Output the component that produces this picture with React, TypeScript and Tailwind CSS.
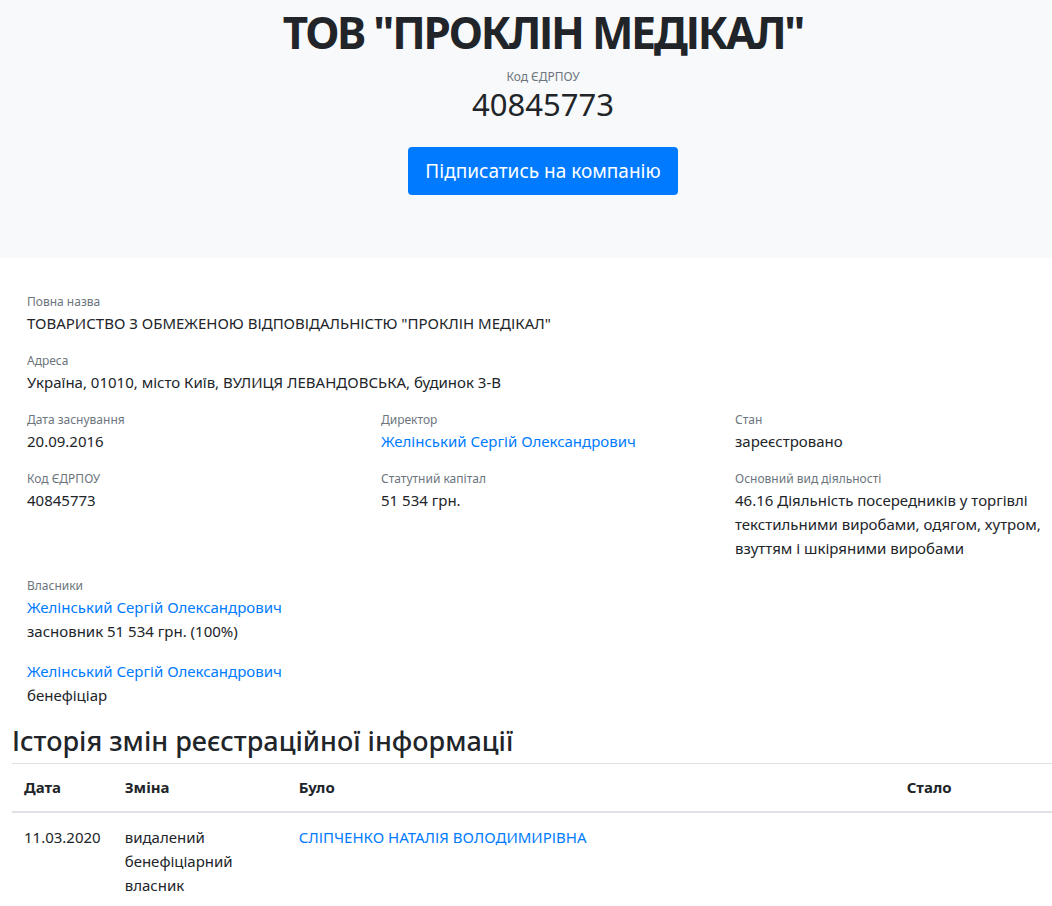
import React from 'react';

const font = { fontFamily: '"Noto Sans", "Open Sans", sans-serif' };

interface FieldProps {
  label: string;
  children: React.ReactNode;
}

const Field: React.FC<FieldProps> = ({ label, children }) => (
  <div className="mb-[17px]">
    <div className="text-[12px] leading-[18px] text-[#6c757d]">{label}</div>
    <div className="text-[15px] leading-[24px] text-[#212529]">{children}</div>
  </div>
);

const Link: React.FC<{ children: React.ReactNode }> = ({ children }) => (
  <a href="#" className="text-[#007bff] no-underline">{children}</a>
);

const App: React.FC = () => {
  return (
    <div className="min-h-screen bg-white text-[#212529]" style={font}>
      {/* header block */}
      <div className="bg-[#f8f9fa] h-[258px] flex flex-col items-center pt-[4px] pl-[34px]">
        <h1 className="text-[44px] leading-[56px] font-bold tracking-[-2.2px]">ТОВ "ПРОКЛІН МЕДІКАЛ"</h1>
        <div className="text-[12px] leading-[18px] text-[#6c757d] mt-[8px]">Код ЄДРПОУ</div>
        <div className="text-[31px] leading-[36px] mt-[0px]">40845773</div>
        <button className="mt-[25px] h-[48px] px-[17px] rounded-[4px] bg-[#007bff] text-white text-[19px]">
          Підписатись на компанію
        </button>
      </div>

      {/* details */}
      <div className="pl-[27px] pt-[35px]">
        <Field label="Повна назва">ТОВАРИСТВО З ОБМЕЖЕНОЮ ВІДПОВІДАЛЬНІСТЮ "ПРОКЛІН МЕДІКАЛ"</Field>
        <Field label="Адреса">Україна, 01010, місто Київ, ВУЛИЦЯ ЛЕВАНДОВСЬКА, будинок 3-В</Field>

        <div className="grid grid-cols-[354px_354px_1fr]">
          <Field label="Дата заснування">20.09.2016</Field>
          <Field label="Директор"><Link>Желінський Сергій Олександрович</Link></Field>
          <Field label="Стан">зареєстровано</Field>
          <Field label="Код ЄДРПОУ">40845773</Field>
          <Field label="Статутний капітал">51 534 грн.</Field>
          <Field label="Основний вид діяльності">
            46.16 Діяльність посередників у торгівлі текстильними виробами, одягом, хутром, взуттям і шкіряними виробами
          </Field>
        </div>

        <div>
          <div className="text-[12px] leading-[18px] text-[#6c757d]">Власники</div>
          <div className="text-[15px] leading-[24px]">
            <div><Link>Желінський Сергій Олександрович</Link></div>
            <div>засновник 51 534 грн. (100%)</div>
            <div className="mt-[16px]"><Link>Желінський Сергій Олександрович</Link></div>
            <div>бенефіціар</div>
          </div>
        </div>
      </div>

      {/* history */}
      <div className="pl-[12px]">
        <h3 className="text-[27px] leading-[34px] font-medium mt-[17px] mb-[5px]">Історія змін реєстраційної інформації</h3>
        <table className="w-full border-collapse text-[15px] leading-[24px]">
          <thead>
            <tr className="border-t border-[#dee2e6] border-b-2">
              <th className="w-[100px] text-left font-bold px-[12px] pt-[11px] pb-[12px]">Дата</th>
              <th className="w-[174px] text-left font-bold px-[12px] pt-[11px] pb-[12px]">Зміна</th>
              <th className="w-[608px] text-left font-bold px-[12px] pt-[11px] pb-[12px]">Було</th>
              <th className="text-left font-bold px-[12px] pt-[11px] pb-[12px]">Стало</th>
            </tr>
          </thead>
          <tbody>
            <tr>
              <td className="p-[12px] align-top">11.03.2020</td>
              <td className="p-[12px] align-top">видалений бенефіціарний власник</td>
              <td className="p-[12px] align-top"><Link>СЛІПЧЕНКО НАТАЛІЯ ВОЛОДИМИРІВНА</Link></td>
              <td className="p-[12px] align-top"></td>
            </tr>
          </tbody>
        </table>
      </div>
    </div>
  );
};

export default App;
